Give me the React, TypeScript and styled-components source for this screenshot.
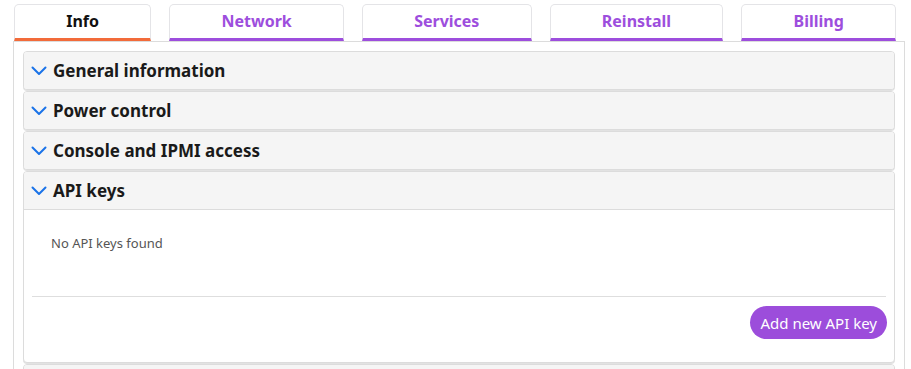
import React, { useState } from "react";
import styled, { createGlobalStyle } from "styled-components";

const GlobalStyle = createGlobalStyle`
  body {
    margin: 0;
    background: #ffffff;
    font-family: "Noto Sans", "Open Sans", sans-serif;
    color: #212121;
  }
`;

const tabs = ["Info", "Network", "Services", "Reinstall", "Billing"];
const sections = ["General information", "Power control", "Console and IPMI access", "API keys"];

const Chevron = () => (
  <svg width="16" height="10" viewBox="0 0 16 10" fill="none">
    <path d="M1.5 1.5 L8 8 L14.5 1.5" stroke="#1a73e8" strokeWidth="2" strokeLinecap="round" strokeLinejoin="round" />
  </svg>
);

const App = () => {
  const [active, setActive] = useState("Info");
  const [open, setOpen] = useState("API keys");

  return (
    <Page>
      <GlobalStyle />
      <TabRow>
        {tabs.map((t) => (
          <Tab key={t} active={t === active} onClick={() => setActive(t)}>
            {t}
          </Tab>
        ))}
      </TabRow>
      <Panel>
        {sections.map((s) => (
          <Item key={s}>
            <Header onClick={() => setOpen(open === s ? "" : s)}>
              <Chevron />
              <HeaderTitle>{s}</HeaderTitle>
            </Header>
            {open === s && s === "API keys" && (
              <Body>
                <Empty>No API keys found</Empty>
                <Divider />
                <Footer>
                  <AddButton>Add new API key</AddButton>
                </Footer>
              </Body>
            )}
          </Item>
        ))}
        <Item>
          <Header />
        </Item>
      </Panel>
    </Page>
  );
};

export default App;

const Page = styled.div`
  padding: 4px 6px 0 13px;
  height: 369px;
  box-sizing: border-box;
  overflow: hidden;
`;

const TabRow = styled.div`
  display: flex;
  gap: 18px;
  margin: 0 9px 0 1px;
`;

const Tab = styled.button<{ active: boolean }>`
  flex: 1 1 auto;
  height: 37px;
  padding: 0 12px 2px;
  background: #ffffff;
  border: 1px solid #e4e4e7;
  border-bottom: 3px solid ${(p) => (p.active ? "#f26b3a" : "#9d4edd")};
  border-radius: 5px 5px 0 0;
  font-family: "Noto Sans", "Open Sans", sans-serif;
  font-size: 16px;
  font-weight: 700;
  color: ${(p) => (p.active ? "#111111" : "#9d4edd")};
  cursor: pointer;
  box-sizing: border-box;
`;

const Panel = styled.div`
  border: 1px solid #dcdcdc;
  border-bottom: none;
  padding: 9px 9px 0 9px;
  display: flex;
  flex-direction: column;
  gap: 1px;
  min-height: 400px;
`;

const Item = styled.div`
  border: 1px solid #dcdcdc;
  border-radius: 4px;
  background: #ffffff;
  overflow: hidden;
  box-shadow: 0 1px 0 #e2e2e2;
`;

const Header = styled.div`
  height: 37px;
  display: flex;
  align-items: center;
  gap: 6px;
  padding-left: 7px;
  background: #f5f5f5;
  cursor: pointer;
`;

const HeaderTitle = styled.span`
  font-size: 17px;
  font-weight: 700;
  color: #1a1a1a;
`;

const Body = styled.div`
  border-top: 1px solid #dcdcdc;
`;

const Empty = styled.p`
  margin: 0;
  padding: 24px 27px 44px;
  font-size: 13px;
  color: #555555;
`;

const Divider = styled.hr`
  margin: 0 8px;
  border: none;
  border-top: 1px solid #dedede;
`;

const Footer = styled.div`
  display: flex;
  justify-content: flex-end;
  padding: 9px 7px 23px;
`;

const AddButton = styled.button`
  height: 33px;
  padding: 0 10px;
  border: none;
  border-radius: 17px;
  background: #9c4ddb;
  color: #ffffff;
  font-family: "Noto Sans", "Open Sans", sans-serif;
  font-size: 15px;
  cursor: pointer;
`;
